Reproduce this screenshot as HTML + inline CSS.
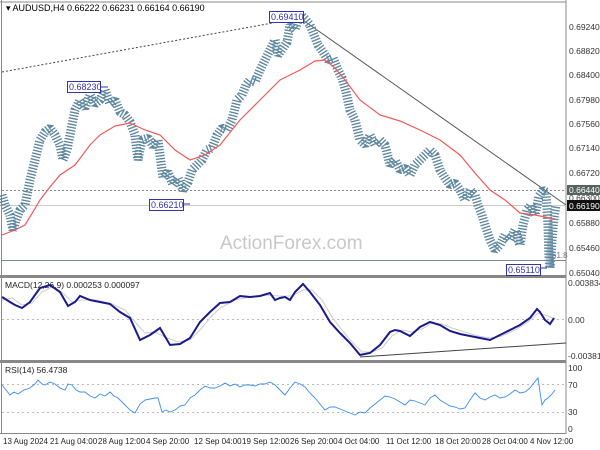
<!DOCTYPE html>
<html><head><meta charset="utf-8"><style>
html,body{margin:0;padding:0;background:#fff}
svg{display:block}
text{font-family:"Liberation Sans",sans-serif}
</style></head><body>
<svg width="600" height="450" viewBox="0 0 600 450" xmlns="http://www.w3.org/2000/svg">
<rect width="600" height="450" fill="#fff"/>
<line x1="566" y1="0" x2="566" y2="434" stroke="#888" stroke-width="1"/>
<line x1="1.5" y1="0" x2="1.5" y2="434" stroke="#888"/>
<line x1="0" y1="2" x2="566" y2="2" stroke="#888"/>
<rect x="0" y="275" width="566" height="3" fill="#888"/>
<rect x="0" y="360" width="566" height="3" fill="#888"/>
<line x1="0" y1="433.5" x2="566" y2="433.5" stroke="#888"/>
<text x="220" y="249" font-size="19" fill="#c8c8c8">ActionForex.com</text>
<line x1="2" y1="72" x2="300" y2="18" stroke="#444" stroke-dasharray="2,2"/>
<line x1="300" y1="18" x2="566" y2="205" stroke="#555"/>
<line x1="2" y1="190.5" x2="566" y2="190.5" stroke="#888" stroke-dasharray="2,2"/>
<line x1="2" y1="205.5" x2="566" y2="205.5" stroke="#ccc"/>
<line x1="2" y1="260.5" x2="566" y2="260.5" stroke="#7a8a90"/>
<text x="552" y="258" font-size="8" fill="#777">61.8</text>
<g fill="none" stroke="#5e87a0" stroke-linejoin="bevel">
<polyline id="pr" stroke-width="9" stroke-dasharray="1.2,1.8" points="2,195 5,205 10,215 13,230 16,220 20,210 25,205 30,180 35,160 40,140 45,132 50,128 55,135 60,145 63,160 67,150 72,125 75,110 80,100 85,108 90,95 95,104 100,100 105,90 110,104 115,100 120,112 125,115 130,122 135,135 138,160 142,140 148,138 153,146 158,140 163,178 168,172 173,185 178,178 183,190 188,182 192,170 197,165 202,160 207,150 212,148 217,135 222,128 227,130 232,120 237,100 242,95 246,85 250,80 255,82 260,70 265,60 270,50 275,40 278,55 283,48 287,42 290,25 295,30 298,20 302,16 306,20 310,25 314,35 318,45 323,52 328,60 333,58 338,70 342,78 346,92 350,110 355,120 360,140 365,145 370,135 375,145 380,140 385,145 390,165 395,160 400,170 405,168 410,175 415,165 420,160 425,155 430,150 435,155 440,170 445,178 450,185 455,183 460,190 465,200 470,190 475,195 478,205 482,215 485,225 490,240 495,250 500,245 505,235 510,240 515,230 520,245 523,225 527,210 531,205 535,215 539,196 543,190 546,192 548,225 549,258 550,268 552,240 554,218 556,205"/>
<use href="#pr" stroke-width="1.5" stroke-dasharray="none"/>
</g>
<polyline fill="none" stroke="#f25a5a" stroke-width="1.2" points="2,235 15,230 25,225 33,212 40,200 50,187 60,175 75,165 90,145 100,135 115,126 130,123 145,130 160,135 175,150 190,160 205,155 220,145 240,120 260,100 280,80 300,70 315,61 325,60 335,68 345,80 360,100 380,115 400,121 420,130 440,140 460,155 475,173 490,190 505,200 520,213 535,215 545,217 555,219"/>
<g font-size="9" fill="#3333aa">
<rect x="269.5" y="11.5" width="34" height="11" fill="#fff" stroke="#3333aa"/><text x="271" y="20">0.69410</text>
<rect x="67.5" y="81.5" width="33" height="11" fill="#fff" stroke="#3333aa"/><line x1="100" y1="87" x2="108" y2="87" stroke="#3333aa"/><text x="69" y="90">0.68230</text>
<rect x="149.5" y="199.5" width="34" height="11" fill="#fff" stroke="#3333aa"/><line x1="183" y1="204" x2="190" y2="204" stroke="#3333aa"/><text x="151" y="208">0.66210</text>
<rect x="506.5" y="264.5" width="34" height="11" fill="#fff" stroke="#3333aa"/><line x1="540" y1="268" x2="547" y2="268" stroke="#3333aa"/><text x="508" y="273">0.65110</text>
</g>
<text x="6" y="11" font-size="9" fill="#000">▾ AUDUSD,H4  0.66222 0.66231 0.66164 0.66190</text>
<g font-size="8.5" fill="#333">
<text x="569" y="30">0.69240</text>
<text x="569" y="54">0.68820</text>
<text x="569" y="78">0.68400</text>
<text x="569" y="103">0.67980</text>
<text x="569" y="127">0.67560</text>
<text x="569" y="151">0.67140</text>
<text x="569" y="176">0.66720</text>
<text x="569" y="201">0.66300</text>
<text x="569" y="226">0.65880</text>
<text x="569" y="251">0.65460</text>
<text x="569" y="276">0.65040</text>
</g>
<rect x="567" y="185" width="33" height="10" fill="#57625f"/><text x="569" y="193" font-size="8.5" fill="#fff">0.66440</text>
<rect x="567" y="200" width="33" height="11" fill="#111"/><text x="569" y="209" font-size="8.5" fill="#fff">0.66190</text>
<line x1="2" y1="319.5" x2="566" y2="319.5" stroke="#bbb" stroke-dasharray="2,3"/>
<text x="5" y="288" font-size="8.5" fill="#222">MACD(12,26,9) 0.000253 0.000097</text>
<line x1="360" y1="357" x2="566" y2="343" stroke="#444"/>
<polyline fill="none" stroke="#ccc" stroke-width="1" points="2,300 12,298 22,305 32,303 42,292 52,287 62,292 72,302 82,300 95,300 110,303 125,310 135,322 145,333 155,332 165,337 178,342 190,340 200,330 210,318 220,308 235,300 250,297 265,295 280,296 292,296 303,290 312,290 322,300 332,317 342,330 352,342 362,352 372,352 382,348 392,336 402,330 412,332 422,329 432,323 442,324 452,328 465,332 478,336 490,338 502,336 515,330 528,322 538,313 548,316 555,319"/>
<polyline fill="none" stroke="#1a1a8c" stroke-width="2" points="2,297 10,302 15,305 22,308 30,302 40,288 50,285 60,292 68,306 75,302 80,296 90,300 100,302 110,304 120,312 130,318 140,340 150,335 160,328 170,345 180,344 190,338 200,322 210,312 220,303 230,302 240,296 250,297 260,296 270,293 275,300 280,298 285,297 290,300 295,292 303,284 310,292 320,305 330,322 340,333 350,343 360,355 370,353 380,345 390,332 395,330 400,331 410,336 420,327 430,322 440,325 450,331 460,334 470,336 480,338 490,340 500,335 510,330 520,325 530,318 537,309 540,312 545,320 550,324 554,318"/>
<g font-size="8.5" fill="#333">
<text x="568" y="286">0.003834</text>
<text x="568" y="323">0.00</text>
<text x="568" y="359">-0.003811</text>
</g>
<line x1="2" y1="384.5" x2="566" y2="384.5" stroke="#bbb" stroke-dasharray="2,3"/>
<line x1="2" y1="412.5" x2="566" y2="412.5" stroke="#bbb" stroke-dasharray="2,3"/>
<text x="5" y="373" font-size="8.5" fill="#222">RSI(14) 56.4738</text>
<polyline fill="none" stroke="#3d8ef0" stroke-width="0.9" points="2,385 6,390 10,395 14,392 18,394 24,390 30,388 35,384 38,380 42,384 45,385 50,382 55,384 60,388 65,390 68,384 72,385 76,390 80,392 85,392 90,396 95,398 100,394 105,396 110,392 114,396 118,398 122,402 125,405 130,410 135,413 140,404 145,400 150,399 155,398 158,398 162,412 166,410 170,412 175,410 180,406 185,405 190,398 195,395 200,390 205,386 210,388 215,388 220,386 225,383 230,386 235,384 240,387 245,385 250,385 255,386 260,384 265,384 270,382 275,385 280,390 285,395 290,388 295,382 300,384 305,387 310,393 315,398 320,404 325,410 330,407 335,407 340,409 345,411 350,413 355,415 360,412 365,413 370,408 375,404 380,400 385,396 390,397 395,399 400,402 405,405 410,400 415,401 420,403 425,405 430,398 435,395 440,400 445,403 450,406 455,407 460,409 465,408 470,400 475,393 480,398 485,400 490,397 495,395 500,398 505,397 510,394 515,390 520,393 525,392 530,388 533,384 538,378 540,392 542,405 545,400 548,398 552,394 555,390"/>
<g font-size="8.5" fill="#333">
<text x="568" y="371">100</text>
<text x="568" y="388">70</text>
<text x="568" y="415">30</text>
<text x="568" y="432">0</text>
</g>
<g font-size="8" fill="#222">
<text x="3" y="444">13 Aug 2024</text>
<text x="50" y="444">21 Aug 04:00</text>
<text x="98" y="444">28 Aug 12:00</text>
<text x="146" y="444">4 Sep 20:00</text>
<text x="194" y="444">12 Sep 04:00</text>
<text x="242" y="444">19 Sep 12:00</text>
<text x="290" y="444">26 Sep 20:00</text>
<text x="338" y="444">4 Oct 04:00</text>
<text x="386" y="444">11 Oct 12:00</text>
<text x="435" y="444">18 Oct 20:00</text>
<text x="482" y="444">28 Oct 04:00</text>
<text x="530" y="444">4 Nov 12:00</text>
</g>
</svg>
</body></html>
